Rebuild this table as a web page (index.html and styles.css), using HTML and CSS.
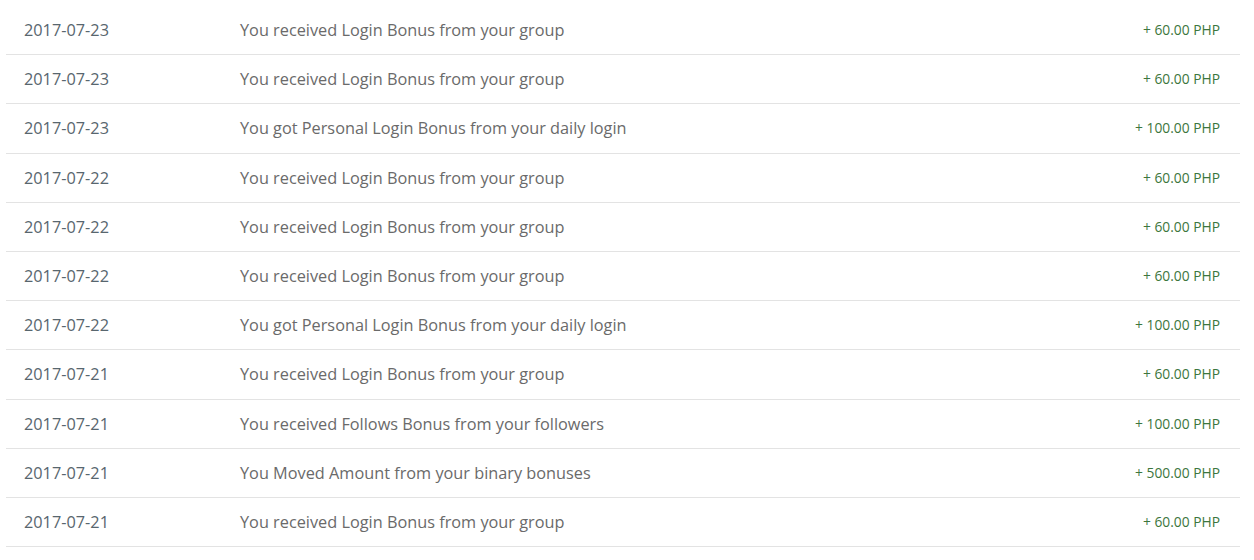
FILE: index.html
```html
<!DOCTYPE html>
<html>
<head>
<meta charset="utf-8">
<link rel="stylesheet" href="styles.css">
</head>
<body>
<div class="page">
  <table class="ledger">
    <tbody>
      <tr><td class="date">2017-07-23</td><td class="desc">You received Login Bonus from your group</td><td class="amt">+ 60.00 PHP</td></tr>
      <tr><td class="date">2017-07-23</td><td class="desc">You received Login Bonus from your group</td><td class="amt">+ 60.00 PHP</td></tr>
      <tr><td class="date">2017-07-23</td><td class="desc">You got Personal Login Bonus from your daily login</td><td class="amt">+ 100.00 PHP</td></tr>
      <tr><td class="date">2017-07-22</td><td class="desc">You received Login Bonus from your group</td><td class="amt">+ 60.00 PHP</td></tr>
      <tr><td class="date">2017-07-22</td><td class="desc">You received Login Bonus from your group</td><td class="amt">+ 60.00 PHP</td></tr>
      <tr><td class="date">2017-07-22</td><td class="desc">You received Login Bonus from your group</td><td class="amt">+ 60.00 PHP</td></tr>
      <tr><td class="date">2017-07-22</td><td class="desc">You got Personal Login Bonus from your daily login</td><td class="amt">+ 100.00 PHP</td></tr>
      <tr><td class="date">2017-07-21</td><td class="desc">You received Login Bonus from your group</td><td class="amt">+ 60.00 PHP</td></tr>
      <tr><td class="date">2017-07-21</td><td class="desc">You received Follows Bonus from your followers</td><td class="amt">+ 100.00 PHP</td></tr>
      <tr><td class="date">2017-07-21</td><td class="desc">You Moved Amount from your binary bonuses</td><td class="amt">+ 500.00 PHP</td></tr>
      <tr><td class="date">2017-07-21</td><td class="desc">You received Login Bonus from your group</td><td class="amt">+ 60.00 PHP</td></tr>
    </tbody>
  </table>
</div>
</body>
</html>
```
FILE: styles.css
```css
html, body {
  margin: 0;
  padding: 0;
  background: #ffffff;
}
.page {
  padding: 6px 14px 0 6px;
  font-family: "Open Sans", "Liberation Sans", sans-serif;
}
.ledger {
  width: 100%;
  border-collapse: collapse;
}
.ledger td {
  padding: 0 18px;
  height: 48.2px;
  border-bottom: 1px solid #e3e3e3;
  vertical-align: middle;
  line-height: 20px;
}
.date {
  width: 180px;
  font-size: 16.3px;
  color: #58666e;
}
.desc {
  font-size: 16.3px;
  color: #6a6a6a;
}
.amt {
  text-align: right;
  font-size: 13.8px;
  color: #3c763d;
  padding-right: 20px !important;
}
```
